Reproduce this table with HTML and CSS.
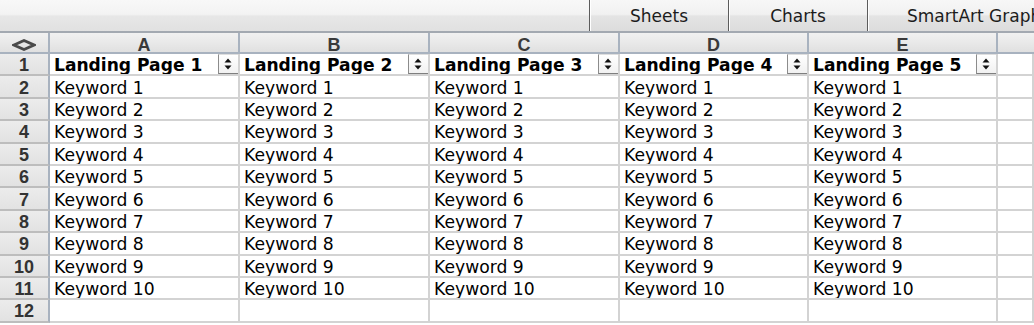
FILE: index.html
```html
<!DOCTYPE html>
<html>
<head>
<meta charset="utf-8">
<link rel="stylesheet" href="styles.css">
</head>
<body>
<div class="toolbar">
  <div class="tabs">
    <div class="tab">Sheets</div>
    <div class="tab">Charts</div>
    <div class="tab tab-wide">SmartArt Graphics</div>
  </div>
</div>
<div class="sheet">
  <div class="corner"><svg width="24" height="12" viewBox="0 0 24 12"><polygon points="2,6 12,1.5 22,6 12,10.5" fill="none" stroke="#4a4a4a" stroke-width="2.8" stroke-linejoin="miter"/></svg></div>
  <div class="col-h">A</div><div class="col-h">B</div><div class="col-h">C</div><div class="col-h">D</div><div class="col-h">E</div><div class="col-h col-last"></div>

  <div class="row-h">1</div>
  <div class="cell hdr"><span>Landing Page 1</span><span class="dd"><svg width="18" height="18" viewBox="0 0 18 18"><polygon points="4.5,7.5 11.5,7.5 8,3.5" fill="#111"/><polygon points="4.5,10.5 11.5,10.5 8,14.5" fill="#111"/></svg></span></div>
  <div class="cell hdr"><span>Landing Page 2</span><span class="dd"><svg width="18" height="18" viewBox="0 0 18 18"><polygon points="4.5,7.5 11.5,7.5 8,3.5" fill="#111"/><polygon points="4.5,10.5 11.5,10.5 8,14.5" fill="#111"/></svg></span></div>
  <div class="cell hdr"><span>Landing Page 3</span><span class="dd"><svg width="18" height="18" viewBox="0 0 18 18"><polygon points="4.5,7.5 11.5,7.5 8,3.5" fill="#111"/><polygon points="4.5,10.5 11.5,10.5 8,14.5" fill="#111"/></svg></span></div>
  <div class="cell hdr"><span>Landing Page 4</span><span class="dd"><svg width="18" height="18" viewBox="0 0 18 18"><polygon points="4.5,7.5 11.5,7.5 8,3.5" fill="#111"/><polygon points="4.5,10.5 11.5,10.5 8,14.5" fill="#111"/></svg></span></div>
  <div class="cell hdr"><span>Landing Page 5</span><span class="dd"><svg width="18" height="18" viewBox="0 0 18 18"><polygon points="4.5,7.5 11.5,7.5 8,3.5" fill="#111"/><polygon points="4.5,10.5 11.5,10.5 8,14.5" fill="#111"/></svg></span></div>
  <div class="cell"></div>

  <div class="row-h">2</div><div class="cell">Keyword 1</div><div class="cell">Keyword 1</div><div class="cell">Keyword 1</div><div class="cell">Keyword 1</div><div class="cell">Keyword 1</div><div class="cell"></div>
  <div class="row-h">3</div><div class="cell">Keyword 2</div><div class="cell">Keyword 2</div><div class="cell">Keyword 2</div><div class="cell">Keyword 2</div><div class="cell">Keyword 2</div><div class="cell"></div>
  <div class="row-h">4</div><div class="cell">Keyword 3</div><div class="cell">Keyword 3</div><div class="cell">Keyword 3</div><div class="cell">Keyword 3</div><div class="cell">Keyword 3</div><div class="cell"></div>
  <div class="row-h">5</div><div class="cell">Keyword 4</div><div class="cell">Keyword 4</div><div class="cell">Keyword 4</div><div class="cell">Keyword 4</div><div class="cell">Keyword 4</div><div class="cell"></div>
  <div class="row-h">6</div><div class="cell">Keyword 5</div><div class="cell">Keyword 5</div><div class="cell">Keyword 5</div><div class="cell">Keyword 5</div><div class="cell">Keyword 5</div><div class="cell"></div>
  <div class="row-h">7</div><div class="cell">Keyword 6</div><div class="cell">Keyword 6</div><div class="cell">Keyword 6</div><div class="cell">Keyword 6</div><div class="cell">Keyword 6</div><div class="cell"></div>
  <div class="row-h">8</div><div class="cell">Keyword 7</div><div class="cell">Keyword 7</div><div class="cell">Keyword 7</div><div class="cell">Keyword 7</div><div class="cell">Keyword 7</div><div class="cell"></div>
  <div class="row-h">9</div><div class="cell">Keyword 8</div><div class="cell">Keyword 8</div><div class="cell">Keyword 8</div><div class="cell">Keyword 8</div><div class="cell">Keyword 8</div><div class="cell"></div>
  <div class="row-h">10</div><div class="cell">Keyword 9</div><div class="cell">Keyword 9</div><div class="cell">Keyword 9</div><div class="cell">Keyword 9</div><div class="cell">Keyword 9</div><div class="cell"></div>
  <div class="row-h">11</div><div class="cell">Keyword 10</div><div class="cell">Keyword 10</div><div class="cell">Keyword 10</div><div class="cell">Keyword 10</div><div class="cell">Keyword 10</div><div class="cell"></div>
  <div class="row-h">12</div><div class="cell"></div><div class="cell"></div><div class="cell"></div><div class="cell"></div><div class="cell"></div><div class="cell"></div>
</div>
</body>
</html>
```
FILE: styles.css
```css
html, body {
  margin: 0;
  padding: 0;
}
body {
  width: 1034px;
  height: 325px;
  overflow: hidden;
  background: #ffffff;
  font-family: "DejaVu Sans", Verdana, sans-serif;
  color: #000;
}
.toolbar {
  height: 31px;
  border-bottom: 2px solid #a3a9b1;
  background: linear-gradient(#f8f8f8 0%, #f3f3f3 46%, #e7e7e7 52%, #e1e1e1 100%);
  overflow: hidden;
}
.tabs {
  display: flex;
  margin-left: 589px;
  height: 31px;
}
.tab {
  flex: 0 0 138px;
  border-left: 1px solid #5c5c5c;
  text-align: center;
  font-size: 17px;
  line-height: 33px;
  color: #1c1c1c;
  white-space: nowrap;
  background: linear-gradient(#f7f7f7 0%, #f1f1f1 46%, #e4e4e4 52%, #dcdcdc 100%);
  box-shadow: inset 1px 0 0 #ffffff;
}
.tab-wide {
  flex: 0 0 300px;
  text-align: left;
  padding-left: 39px;
}
.sheet {
  display: grid;
  grid-template-columns: 50px 190px 190px 190px 189px 189px 1fr;
  grid-template-rows: 21px repeat(12, 22.4px);
}
.corner, .col-h {
  background: linear-gradient(#f1f1f1 0%, #e9e9e9 50%, #e0e0e0 100%);
  border-right: 2px solid #a8b2bf;
  border-bottom: 2px solid #a8b2bf;
  display: flex;
  align-items: center;
  justify-content: center;
}
.corner svg {
  margin-top: 5px;
}
.col-h {
  font-family: "Liberation Sans", Arial, sans-serif;
  font-weight: bold;
  font-size: 18px;
  line-height: 18px;
  color: #3a3a3a;
  padding-top: 4px;
}
.col-last {
  border-right: none;
}
.row-h {
  background: linear-gradient(#ececec 0%, #e2e2e2 100%);
  border-right: 2px solid #a8b2bf;
  border-bottom: 2px solid #bdbdbd;
  font-family: "Liberation Sans", Arial, sans-serif;
  font-weight: bold;
  font-size: 18px;
  line-height: 18px;
  color: #333;
  display: flex;
  align-items: center;
  justify-content: center;
  padding-top: 2px;
}
.cell {
  border-right: 2px solid #d3d3d3;
  border-bottom: 2px solid #d3d3d3;
  padding-left: 4px;
  font-size: 17.2px;
  line-height: 18px;
  white-space: nowrap;
  overflow: hidden;
  display: flex;
  align-items: center;
  padding-top: 2px;
}
.hdr {
  font-weight: bold;
  font-size: 17.1px;
  justify-content: space-between;
  align-items: stretch;
  padding-top: 0;
}
.hdr > span:first-child {
  display: flex;
  align-items: center;
  padding-top: 2px;
}
.dd {
  flex: 0 0 20px;
  box-sizing: border-box;
  border-left: 1px solid #8c8c8c;
  border-top: 1px solid #dedede;
  border-bottom: 2px solid #7e7e7e;
  background: linear-gradient(#ffffff, #f1f1f1);
  display: flex;
  align-items: center;
  justify-content: center;
  margin-bottom: -1px;
}
```
